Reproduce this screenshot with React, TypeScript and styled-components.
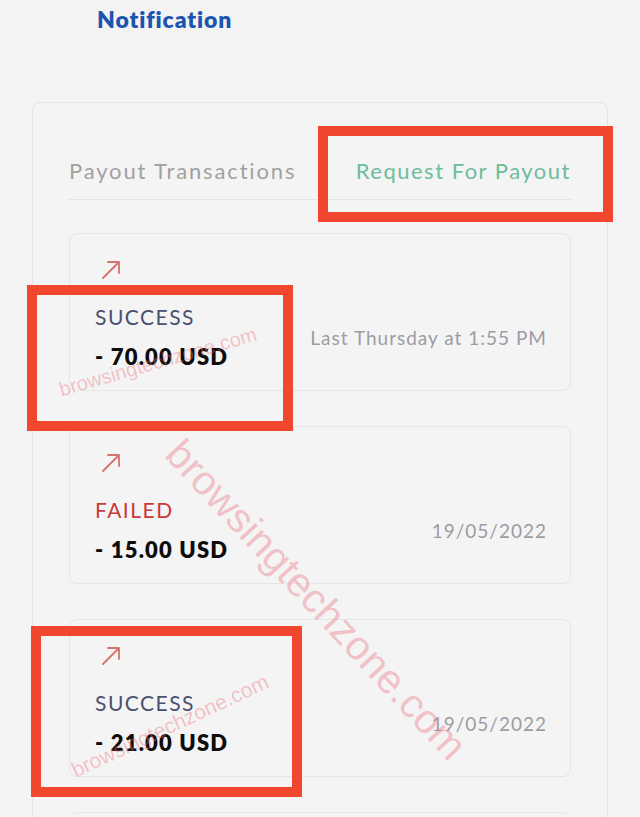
import React, { FC } from 'react';
import styled, { createGlobalStyle } from 'styled-components';

type Payout = {
  status: 'SUCCESS' | 'FAILED';
  amount: string;
  date: string;
};

const payouts: Payout[] = [
  { status: 'SUCCESS', amount: '- 70.00 USD', date: 'Last Thursday at 1:55 PM' },
  { status: 'FAILED', amount: '- 15.00 USD', date: '19/05/2022' },
  { status: 'SUCCESS', amount: '- 21.00 USD', date: '19/05/2022' },
];

const GlobalStyle = createGlobalStyle`
  html, body {
    margin: 0;
    padding: 0;
    background: #f3f3f3;
    font-family: Lato, 'Noto Sans', sans-serif;
    overflow: hidden;
  }
`;

const ArrowIcon: FC = () => (
  <svg width="20" height="20" viewBox="0 0 20 20" fill="none">
    <path d="M2 18L18 2M7 2H18V13" stroke="#d4736b" strokeWidth="1.8" strokeLinecap="round" strokeLinejoin="round" />
  </svg>
);

const App: FC = () => (
  <>
    <GlobalStyle />
    <Page>
      <Title>Notification</Title>
      <Panel>
        <Tabs>
          <Tab>Payout Transactions</Tab>
          <Tab active>Request For Payout</Tab>
        </Tabs>
        <List>
          {payouts.map((p, i) => (
            <Card key={i}>
              <Arrow>
                <ArrowIcon />
              </Arrow>
              <Row>
                <div>
                  <Status failed={p.status === 'FAILED'}>{p.status}</Status>
                  <Amount>{p.amount}</Amount>
                </div>
                <DateText>{p.date}</DateText>
              </Row>
            </Card>
          ))}
          {/* next item, only its top edge is visible */}
          <Card />
        </List>
      </Panel>

      <Highlight style={{ left: 318, top: 126, width: 295, height: 96 }} />
      <Highlight style={{ left: 27, top: 285, width: 266, height: 146 }} />
      <Highlight style={{ left: 31, top: 626, width: 271, height: 171 }} />

      <Watermark size={20} style={{ left: 158, top: 362, transform: 'translate(-50%, -50%) rotate(-16deg)' }}>
        browsingtechzone.com
      </Watermark>
      <Watermark size={21} style={{ left: 170, top: 726, transform: 'translate(-50%, -50%) rotate(-25deg)' }}>
        browsingtechzone.com
      </Watermark>
      <Watermark size={41} style={{ left: 316, top: 600, transform: 'translate(-50%, -50%) rotate(47deg)' }}>
        browsingtechzone.com
      </Watermark>
    </Page>
  </>
);

export default App;

const Page = styled.div`
  position: relative;
  width: 640px;
  height: 817px;
  overflow: hidden;
  background: #f3f3f3;
`;

const Title = styled.h1`
  margin: 0;
  padding: 5px 0 0 97px;
  height: 102px;
  box-sizing: border-box;
  font-size: 23px;
  font-weight: 800;
  color: #1b55b0;
  letter-spacing: 0.9px;
`;

const Panel = styled.div`
  margin: 0 32px;
  padding: 0 36px;
  border: 1.5px solid #e3e3e3;
  border-radius: 8px;
  background: #f4f4f4;
  height: 800px;
`;

const Tabs = styled.div`
  display: flex;
  justify-content: space-between;
  align-items: flex-start;
  height: 97px;
  padding-top: 54px;
  box-sizing: border-box;
  border-bottom: 1.5px solid #e4e4e4;
`;

const Tab = styled.div<{ active?: boolean }>`
  font-size: 22px;
  line-height: 28px;
  font-weight: 400;
  letter-spacing: ${({ active }) => (active ? '1.5px' : '1.85px')};
  color: ${({ active }) => (active ? '#6dbd9a' : '#a1a1a1')};
`;

const List = styled.div`
  display: flex;
  flex-direction: column;
  gap: 35px;
  margin-top: 33px;
`;

const Card = styled.div`
  height: 158px;
  box-sizing: border-box;
  padding: 26px 23px 0 25px;
  border: 1.5px solid #e6e6e6;
  border-radius: 8px;
`;

const Arrow = styled.div`
  display: flex;
  padding-left: 6px;
  height: 20px;
`;

const Row = styled.div`
  display: flex;
  justify-content: space-between;
  align-items: center;
  margin-top: 25px;
`;

const Status = styled.div<{ failed?: boolean }>`
  font-size: 21px;
  line-height: 24px;
  letter-spacing: 1.5px;
  color: ${({ failed }) => (failed ? '#c9383a' : '#4a5070')};
`;

const Amount = styled.div`
  margin-top: 16px;
  font-size: 22px;
  line-height: 24px;
  font-weight: 800;
  letter-spacing: 1.2px;
  color: #0d0d0d;
`;

const DateText = styled.div`
  font-size: 19px;
  letter-spacing: 1px;
  color: #9c9ca4;
`;

const Highlight = styled.div`
  position: absolute;
  box-sizing: border-box;
  border: 10px solid #f2472f;
  pointer-events: none;
`;

const Watermark = styled.div<{ size: number }>`
  position: absolute;
  white-space: nowrap;
  font-family: 'Liberation Sans', Arial, sans-serif;
  font-size: ${({ size }) => size}px;
  color: rgba(236, 120, 135, 0.42);
  pointer-events: none;
`;
